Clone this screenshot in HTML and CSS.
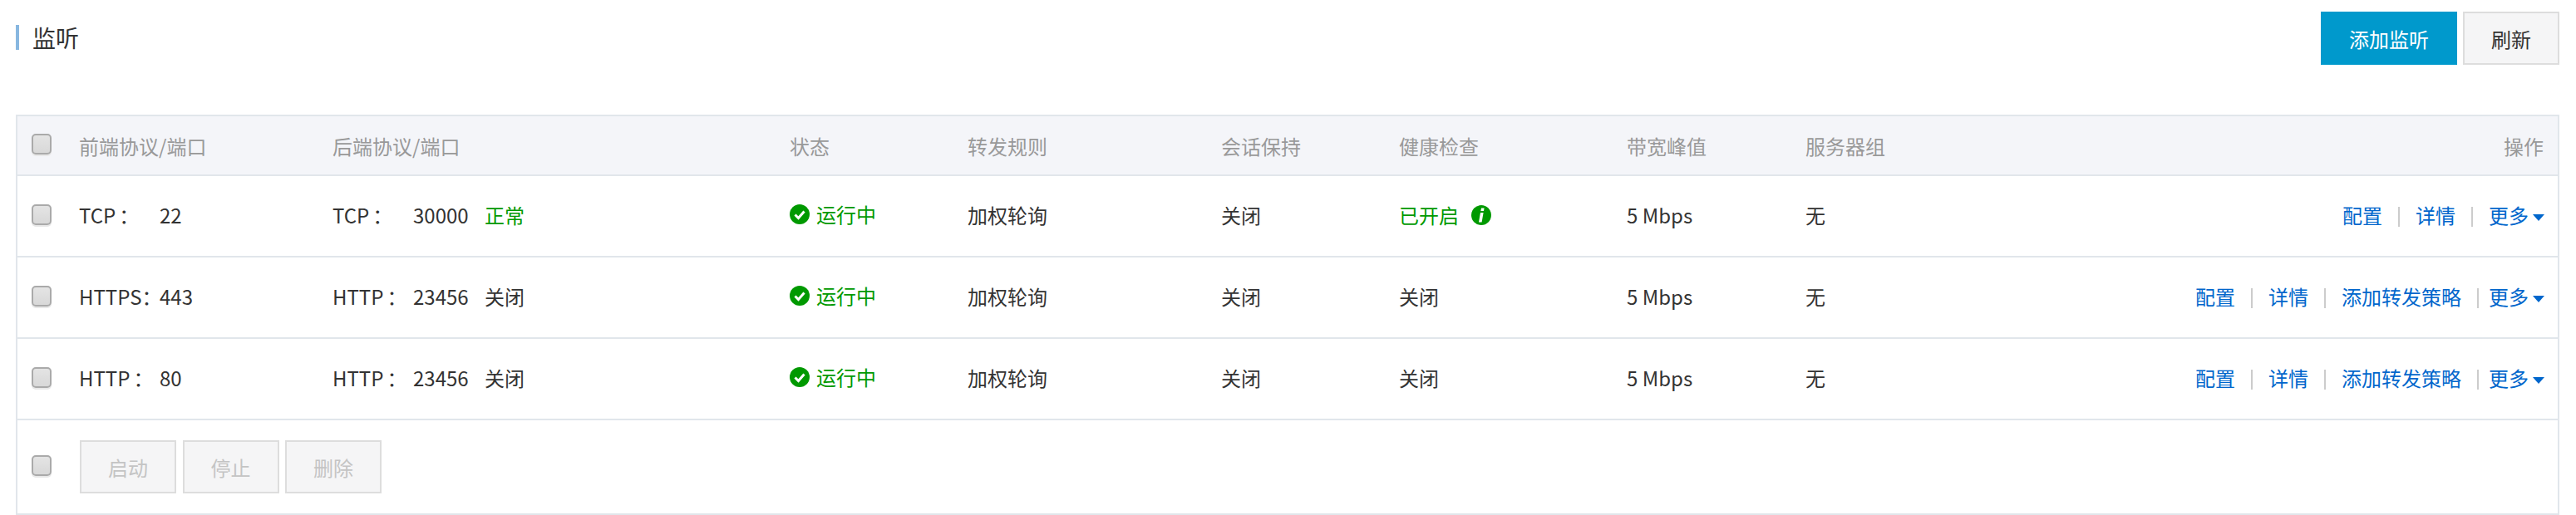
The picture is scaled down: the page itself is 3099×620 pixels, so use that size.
FILE: index.html
```html
<!DOCTYPE html>
<html lang="zh-CN">
<head>
<meta charset="utf-8">
<title>监听</title>
<link rel="stylesheet" href="styles.css">
</head>
<body>
<header class="page-head">
  <h1 class="title">监听</h1>
  <div class="head-actions">
    <button class="btn btn-primary">添加监听</button>
    <button class="btn btn-default">刷新</button>
  </div>
</header>
<table class="listeners">
  <colgroup>
    <col class="c-check"><col class="c-front"><col class="c-back"><col class="c-status"><col class="c-rule"><col class="c-session"><col class="c-health"><col class="c-band"><col class="c-group"><col>
  </colgroup>
  <thead>
    <tr>
      <th><input type="checkbox" class="check"></th>
      <th>前端协议/端口</th>
      <th>后端协议/端口</th>
      <th>状态</th>
      <th>转发规则</th>
      <th>会话保持</th>
      <th>健康检查</th>
      <th>带宽峰值</th>
      <th>服务器组</th>
      <th class="ops">操作</th>
    </tr>
  </thead>
  <tbody>
    <tr>
      <td><input type="checkbox" class="check"></td>
      <td><span class="proto">TCP<span class="colon">：</span></span>22</td>
      <td><span class="proto">TCP<span class="colon">：</span></span><span class="port">30000</span><span class="ok">正常</span></td>
      <td><span class="status"><svg class="ico" viewBox="0 0 24 24"><circle cx="12" cy="12" r="12" fill="#090"/><path d="M6.5 12.5l4 4 7-8" fill="none" stroke="#fff" stroke-width="3"/></svg>运行中</span></td>
      <td>加权轮询</td>
      <td>关闭</td>
      <td><span class="ok">已开启</span><svg class="ico ico-info" viewBox="0 0 24 24"><circle cx="12" cy="12" r="12" fill="#090"/><path d="M12 3.5h3.6l-.6 3.4h-3.6zM11 9h3.6l-2 11.5H9z" fill="#fff"/></svg></td>
      <td>5 Mbps</td>
      <td>无</td>
      <td class="ops"><a class="link">配置</a><i class="sep"></i><a class="link">详情</a><i class="sep"></i><a class="link">更多<b class="caret"></b></a></td>
    </tr>
    <tr>
      <td><input type="checkbox" class="check"></td>
      <td><span class="proto">HTTPS：</span>443</td>
      <td><span class="proto">HTTP<span class="colon">：</span></span><span class="port">23456</span><span>关闭</span></td>
      <td><span class="status"><svg class="ico" viewBox="0 0 24 24"><circle cx="12" cy="12" r="12" fill="#090"/><path d="M6.5 12.5l4 4 7-8" fill="none" stroke="#fff" stroke-width="3"/></svg>运行中</span></td>
      <td>加权轮询</td>
      <td>关闭</td>
      <td>关闭</td>
      <td>5 Mbps</td>
      <td>无</td>
      <td class="ops"><a class="link">配置</a><i class="sep"></i><a class="link">详情</a><i class="sep"></i><a class="link">添加转发策略</a><i class="sep sep-tight"></i><a class="link">更多<b class="caret"></b></a></td>
    </tr>
    <tr>
      <td><input type="checkbox" class="check"></td>
      <td><span class="proto">HTTP<span class="colon">：</span></span>80</td>
      <td><span class="proto">HTTP<span class="colon">：</span></span><span class="port">23456</span><span>关闭</span></td>
      <td><span class="status"><svg class="ico" viewBox="0 0 24 24"><circle cx="12" cy="12" r="12" fill="#090"/><path d="M6.5 12.5l4 4 7-8" fill="none" stroke="#fff" stroke-width="3"/></svg>运行中</span></td>
      <td>加权轮询</td>
      <td>关闭</td>
      <td>关闭</td>
      <td>5 Mbps</td>
      <td>无</td>
      <td class="ops"><a class="link">配置</a><i class="sep"></i><a class="link">详情</a><i class="sep"></i><a class="link">添加转发策略</a><i class="sep sep-tight"></i><a class="link">更多<b class="caret"></b></a></td>
    </tr>
  </tbody>
  <tfoot>
    <tr>
      <td><input type="checkbox" class="check"></td>
      <td colspan="9">
        <div class="bulk">
          <button class="btn btn-disabled">启动</button>
          <button class="btn btn-disabled">停止</button>
          <button class="btn btn-disabled">删除</button>
        </div>
      </td>
    </tr>
  </tfoot>
</table>
</body>
</html>
```
FILE: styles.css
```css
* { box-sizing: border-box; }
html, body { margin: 0; background: #fff; }
body {
  padding: 14px 20px 0 19px;
  font-family: "Noto Sans CJK SC", "Open Sans", sans-serif;
  font-size: 24px;
  color: #333;
}
.page-head {
  display: flex;
  justify-content: space-between;
  align-items: flex-start;
  height: 124px;
}
.title {
  margin: 16px 0 0;
  height: 30px;
  border-left: 4px solid #88b7e0;
  padding-left: 16px;
  font-size: 28px;
  font-weight: 400;
  line-height: 30px;
  color: #333;
}
.head-actions { display: flex; gap: 7px; }
.btn {
  height: 64px;
  padding: 0;
  border: 2px solid #ddd;
  font-family: inherit;
  font-size: 24px;
  background: #f5f5f6;
  color: #333;
}
.btn-primary { width: 164px; border-color: #09c; background: #09c; color: #fff; }
.btn-default { width: 116px; }
.btn-disabled { width: 116px; color: #c4c4c4; }
.listeners {
  width: 3060px;
  table-layout: fixed;
  border-collapse: separate;
  border-spacing: 0;
  border: 2px solid #e1e6eb;
}
.c-check { width: 74px; }
.c-front { width: 305px; }
.c-back { width: 550px; }
.c-status { width: 214px; }
.c-rule { width: 305px; }
.c-session { width: 214px; }
.c-health { width: 274px; }
.c-band { width: 215px; }
.c-group { width: 213px; }
th, td { padding: 0; text-align: left; white-space: nowrap; font-weight: 400; }
th {
  height: 72px;
  background: #f4f5f9;
  color: #999;
  border-bottom: 2px solid #e1e6eb;
}
tbody td { height: 98px; padding-bottom: 3px; border-bottom: 2px solid #e1e6eb; }
tfoot td { height: 112px; }
th:first-child, td:first-child { padding-left: 17px; }
.check {
  appearance: none;
  display: block;
  margin: 0 0 3px;
  width: 24px;
  height: 25px;
  border: 2px solid #aaa;
  border-radius: 5px;
  background: linear-gradient(#e4e4e4, #d8d8d8);
  box-shadow: 0 2px 0 #e8e8e8;
}
tbody .check { margin-bottom: 0; }
.proto { display: inline-block; width: 97px; }
.colon { margin-left: 4px; }
.port { display: inline-block; width: 86px; }
.ok, .status { color: #090; }
.status { display: inline-flex; align-items: center; gap: 8px; }
.ico { display: inline-block; width: 24px; height: 24px; vertical-align: -3px; }
.status .ico { margin-top: 1px; }
.ico-info { margin-left: 15px; vertical-align: -2px; }
.ops { text-align: right; padding-right: 16px; }
th.ops { padding-right: 17px; }
.link { color: #06c; }
.sep {
  display: inline-block;
  width: 2px;
  height: 24px;
  margin: 0 19px;
  vertical-align: -4px;
  background: #ccc;
}
.sep-tight { margin-right: 12px; }
.caret {
  display: inline-block;
  width: 0;
  height: 0;
  margin-left: 5px;
  vertical-align: 3px;
  border-left: 7.5px solid transparent;
  border-right: 7.5px solid transparent;
  border-top: 8px solid #06c;
}
.bulk { display: flex; gap: 7.5px; margin-left: 1px; }
```
